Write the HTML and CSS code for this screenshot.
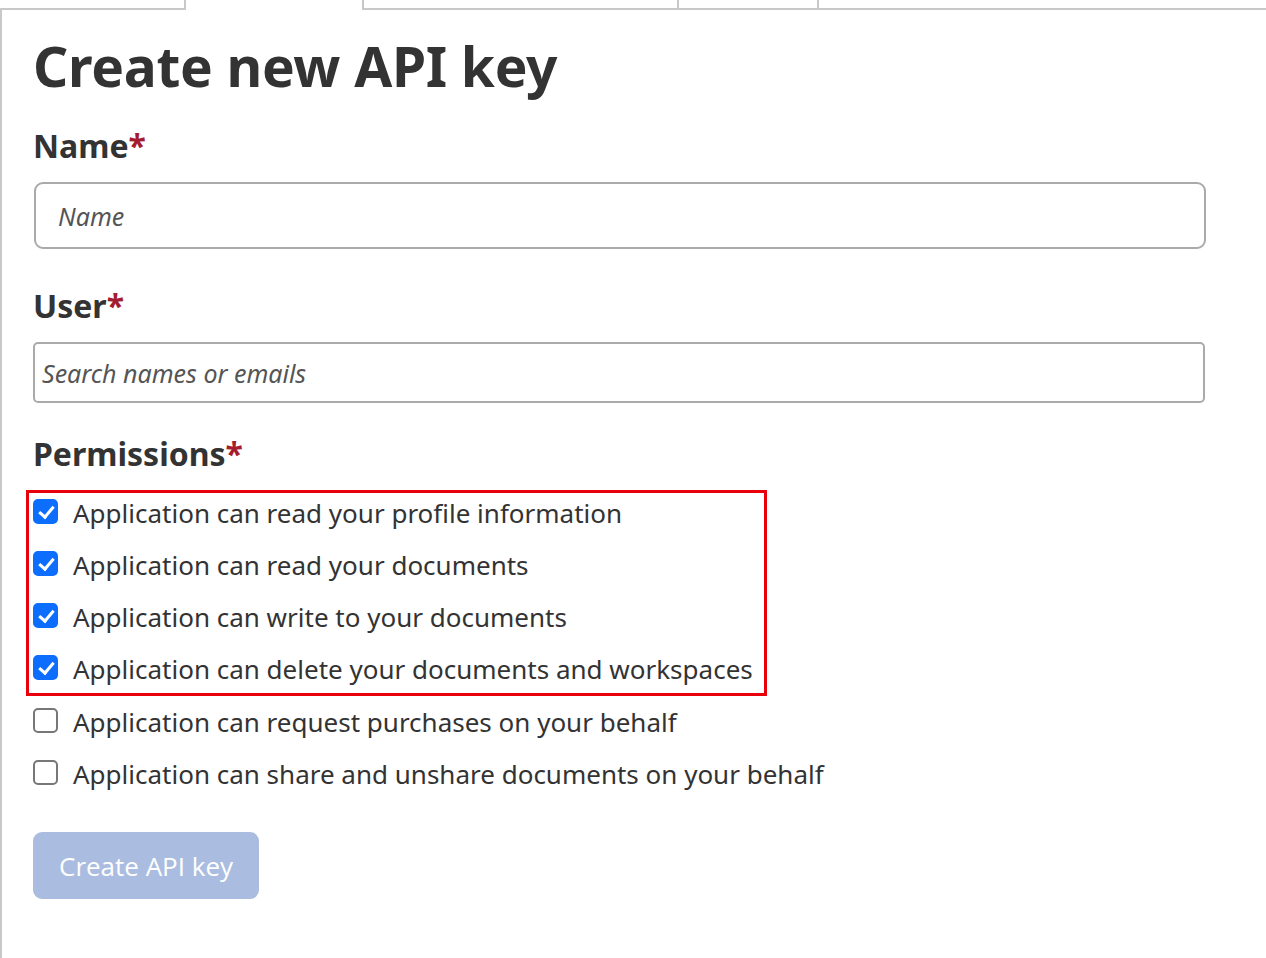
FILE: index.html
```html
<!DOCTYPE html>
<html lang="en">
<head>
  <meta charset="UTF-8">
  <title>Create new API key</title>
  <link rel="stylesheet" href="styles.css">
</head>
<body>
  <div class="tabs">
    <div class="tab"></div>
    <div class="tab active"></div>
    <div class="tab wide"></div>
    <div class="tab small"></div>
    <div class="tab rest"></div>
  </div>

  <div class="panel">
    <h1>Create new API key</h1>

    <label class="field-label" for="name">Name<span class="req">*</span></label>
    <input type="text" id="name" class="name-input" placeholder="Name">

    <label class="field-label" for="user">User<span class="req">*</span></label>
    <input type="text" id="user" class="user-input" placeholder="Search names or emails">

    <div class="field-label">Permissions<span class="req">*</span></div>

    <div class="perms">
      <div class="highlight">
        <label class="perm"><input type="checkbox" checked> Application can read your profile information</label>
        <label class="perm"><input type="checkbox" checked> Application can read your documents</label>
        <label class="perm"><input type="checkbox" checked> Application can write to your documents</label>
        <label class="perm"><input type="checkbox" checked> Application can delete your documents and workspaces</label>
      </div>
      <label class="perm"><input type="checkbox"> Application can request purchases on your behalf</label>
      <label class="perm"><input type="checkbox"> Application can share and unshare documents on your behalf</label>
    </div>

    <button class="create-btn" disabled>Create API key</button>
  </div>
</body>
</html>
```

FILE: styles.css
```css
body {
  margin: 0;
  font-family: 'Noto Sans', 'Open Sans', sans-serif;
  color: #333;
  background: #fff;
}
.tabs {
  display: flex;
  height: 10px;
}
.tab {
  border-bottom: 2px solid #c8c8c8;
  border-right: 2px solid #c8c8c8;
  width: 184px;
}
.tab.active {
  border-bottom: none;
  width: 176px;
}
.tab.wide {
  width: 313px;
}
.tab.small {
  width: 138px;
}
.tab.rest {
  flex: 1;
  border-right: none;
}
.panel {
  border-left: 2px solid #c8c8c8;
  padding: 22px 0 60px 31px;
  margin-top: -2px;
  min-height: 860px;
  width: 1172px;
}
h1 {
  margin: 0 0 24px 0;
  font-size: 55px;
  font-weight: 700;
  line-height: 72px;
  letter-spacing: -0.3px;
}
.field-label {
  display: block;
  font-size: 32px;
  font-weight: 700;
  line-height: 40px;
  margin-bottom: 16px;
}
.req {
  color: #a51c30;
}
input[type="text"] {
  display: block;
  box-sizing: border-box;
  width: 1172px;
  border: 2px solid #aaa;
  font-family: inherit;
  font-size: 25px;
  color: #333;
  outline: none;
}
input[type="text"]::placeholder {
  font-style: italic;
  color: #555;
}
.name-input {
  height: 67px;
  border-radius: 9px;
  padding: 0 22px;
  margin: 0 0 37px 1px;
}
.user-input {
  height: 61px;
  border-radius: 5px;
  padding: 0 7px;
  margin-bottom: 31px;
}
.perms {
  display: flex;
  flex-direction: column;
  gap: 12px;
  margin-top: 16px;
}
.highlight {
  display: flex;
  flex-direction: column;
  gap: 12px;
  border: 3px solid #e8000b;
  width: 741px;
  margin: 0 0 -6px -7px;
  padding: 0 0 4px 4px;
  box-sizing: border-box;
}
.perm {
  display: flex;
  align-items: center;
  gap: 15px;
  font-size: 26px;
  line-height: 40px;
  height: 40px;
}
input[type="checkbox"] {
  appearance: none;
  width: 25px;
  height: 25px;
  margin: 0 0 4px 0;
  border: 2px solid #777;
  border-radius: 5px;
  box-sizing: border-box;
  flex: none;
  position: relative;
}
input[type="checkbox"]:checked {
  background: #0d6efd;
  border-color: #0d6efd;
}
input[type="checkbox"]:checked::after {
  content: "";
  position: absolute;
  left: 7px;
  top: 2px;
  width: 6px;
  height: 12px;
  border: solid #fff;
  border-width: 0 3px 3px 0;
  transform: rotate(40deg);
}
.create-btn {
  margin-top: 38px;
  height: 67px;
  padding: 0 26px;
  border: none;
  border-radius: 9px;
  background: #aabde0;
  color: #fff;
  font-family: 'Open Sans', sans-serif;
  font-size: 26px;
}
```
